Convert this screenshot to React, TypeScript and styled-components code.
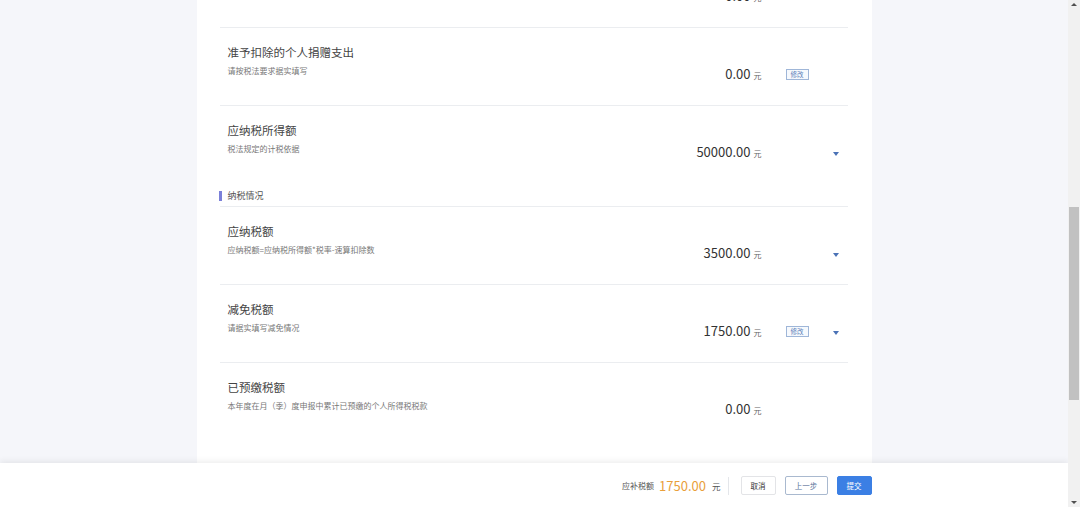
import React from "react";
import { styled, createGlobalStyle } from "styled-components";

type Item = {
  title: string;
  desc: string;
  value: string;
  editable?: boolean;
  dropdown?: boolean;
  noBorder?: boolean;
};

const GlobalStyle = createGlobalStyle`
  html, body {
    margin: 0;
    padding: 0;
    height: 100%;
    overflow: hidden;
    background: #f5f6fa;
    font-family: "Noto Sans CJK SC", "Noto Sans", "Liberation Sans", sans-serif;
  }
  #root {
    height: 100%;
  }
`;

const Page = styled.div`
  display: flex;
  height: 507px;
  width: 1080px;
`;

const Main = styled.div`
  flex: 1;
  display: flex;
  flex-direction: column;
  min-width: 0;
`;

const Content = styled.div`
  flex: 1;
  overflow: hidden;
  display: flex;
  justify-content: center;
`;

const Card = styled.div`
  width: 675px;
  background: #fff;
  padding: 0 24px 40px 23px;
  box-sizing: border-box;
  align-self: flex-start;
  margin-top: -50px;
`;

const Row = styled.div<{ $noBorder?: boolean }>`
  display: grid;
  grid-template-columns: 1fr auto 47px 39px;
  height: 78px;
  box-sizing: border-box;
  border-bottom: ${(p) => (p.$noBorder ? "none" : "1px solid #ebedf0")};
  padding-left: 8px;
`;

const Info = styled.div`
  padding-top: 15px;
`;

const Title = styled.div`
  font-size: 11.5px;
  line-height: 18px;
  color: #444;
`;

const Desc = styled.div`
  margin-top: 4px;
  font-size: 8px;
  line-height: 12px;
  color: #777;
`;

const Value = styled.div`
  padding-top: 37px;
  line-height: 18px;
  display: flex;
  align-items: baseline;
  white-space: nowrap;
`;

const Amount = styled.span`
  font-size: 13px;
  color: #333;
`;

const Unit = styled.span`
  font-size: 8px;
  color: #666;
  margin-left: 3px;
`;

const EditCell = styled.div`
  padding-top: 41px;
  padding-left: 24px;
`;

const EditButton = styled.span`
  display: block;
  width: 23px;
  height: 11px;
  box-sizing: border-box;
  border: 1px solid #9fb6d8;
  background: #f6f9fd;
  color: #5b7fb9;
  font-size: 6.5px;
  line-height: 9px;
  text-align: center;
`;

const ArrowCell = styled.div`
  padding-top: 46px;
  padding-left: 24px;
`;

const Caret = styled.span`
  display: block;
  width: 0;
  height: 0;
  border-left: 3.5px solid transparent;
  border-right: 3.5px solid transparent;
  border-top: 4px solid #4a72b6;
`;

const Section = styled.div`
  height: 23px;
  box-sizing: border-box;
  border-bottom: 1px solid #ebedf0;
  display: flex;
  align-items: flex-start;
  padding-top: 7px;
`;

const SectionBar = styled.span`
  width: 3px;
  height: 10px;
  background: #7b80d9;
  margin-left: -1px;
  margin-right: 6px;
`;

const SectionText = styled.span`
  font-size: 9px;
  line-height: 10px;
  color: #555;
`;

const BottomBar = styled.div`
  height: 44px;
  flex-shrink: 0;
  background: #fff;
  box-shadow: 0 -2px 6px rgba(0, 0, 0, 0.07);
  display: flex;
  justify-content: center;
`;

const BarInner = styled.div`
  width: 675px;
  display: flex;
  justify-content: flex-end;
  align-items: center;
  padding-top: 1px;
`;

const DueLabel = styled.span`
  font-size: 8px;
  color: #555;
  margin-right: 5px;
`;

const DueAmount = styled.span`
  font-size: 13px;
  color: #e9a03b;
  margin-right: 6px;
`;

const DueUnit = styled.span`
  font-size: 8.5px;
  color: #555;
`;

const Divider = styled.span`
  width: 1px;
  height: 18px;
  background: #e4e6ea;
  margin: 0 12px 0 7px;
`;

const Button = styled.button<{ $kind?: "plain" | "outline" | "primary"; $w: number }>`
  width: ${(p) => p.$w}px;
  height: 19px;
  box-sizing: border-box;
  padding: 0;
  margin-left: ${(p) => (p.$kind === "plain" ? 0 : 9)}px;
  font-family: inherit;
  font-size: 7.5px;
  border-radius: 2px;
  border: 1px solid
    ${(p) =>
      p.$kind === "primary" ? "#3b7fe4" : p.$kind === "outline" ? "#a9b9cf" : "#e3e4e7"};
  background: ${(p) => (p.$kind === "primary" ? "#3b7fe4" : "#fff")};
  color: ${(p) =>
    p.$kind === "primary" ? "#fff" : p.$kind === "outline" ? "#5a739a" : "#333"};
`;

const ScrollTrack = styled.div`
  width: 12px;
  background: #f1f1f1;
  display: flex;
  flex-direction: column;
  align-items: center;
`;

const ScrollArrow = styled.span<{ $down?: boolean }>`
  width: 0;
  height: 0;
  margin-top: ${(p) => (p.$down ? "auto" : "3px")};
  margin-bottom: ${(p) => (p.$down ? "3px" : "0")};
  border-left: 3px solid transparent;
  border-right: 3px solid transparent;
  ${(p) => (p.$down ? "border-top: 3px solid #505050;" : "border-bottom: 3px solid #505050;")}
`;

const ScrollThumb = styled.span`
  width: 10px;
  height: 193px;
  background: #c1c1c1;
  margin-top: 201px;
`;

const topItems: Item[] = [
  { title: "", desc: "", value: "0.00" },
  {
    title: "准予扣除的个人捐赠支出",
    desc: "请按税法要求据实填写",
    value: "0.00",
    editable: true,
  },
  {
    title: "应纳税所得额",
    desc: "税法规定的计税依据",
    value: "50000.00",
    dropdown: true,
    noBorder: true,
  },
];

const taxItems: Item[] = [
  {
    title: "应纳税额",
    desc: "应纳税额=应纳税所得额*税率-速算扣除数",
    value: "3500.00",
    dropdown: true,
  },
  {
    title: "减免税额",
    desc: "请据实填写减免情况",
    value: "1750.00",
    editable: true,
    dropdown: true,
  },
  {
    title: "已预缴税额",
    desc: "本年度在月（季）度申报中累计已预缴的个人所得税税款",
    value: "0.00",
    noBorder: true,
  },
];

function TaxRow({ item }: { item: Item }) {
  return (
    <Row $noBorder={item.noBorder}>
      <Info>
        <Title>{item.title}</Title>
        <Desc>{item.desc}</Desc>
      </Info>
      <Value>
        <Amount>{item.value}</Amount>
        <Unit>元</Unit>
      </Value>
      <EditCell>{item.editable && <EditButton>修改</EditButton>}</EditCell>
      <ArrowCell>{item.dropdown && <Caret />}</ArrowCell>
    </Row>
  );
}

export default function App() {
  return (
    <>
      <GlobalStyle />
      <Page>
        <Main>
          <Content>
            <Card>
              {topItems.map((item, i) => (
                <TaxRow key={i} item={item} />
              ))}
              <Section>
                <SectionBar />
                <SectionText>纳税情况</SectionText>
              </Section>
              {taxItems.map((item, i) => (
                <TaxRow key={i} item={item} />
              ))}
            </Card>
          </Content>
          <BottomBar>
            <BarInner>
              <DueLabel>应补税额</DueLabel>
              <DueAmount>1750.00</DueAmount>
              <DueUnit>元</DueUnit>
              <Divider />
              <Button $kind="plain" $w={35}>
                取消
              </Button>
              <Button $kind="outline" $w={43}>
                上一步
              </Button>
              <Button $kind="primary" $w={35}>
                提交
              </Button>
            </BarInner>
          </BottomBar>
        </Main>
        <ScrollTrack>
          <ScrollArrow />
          <ScrollThumb />
          <ScrollArrow $down />
        </ScrollTrack>
      </Page>
    </>
  );
}
